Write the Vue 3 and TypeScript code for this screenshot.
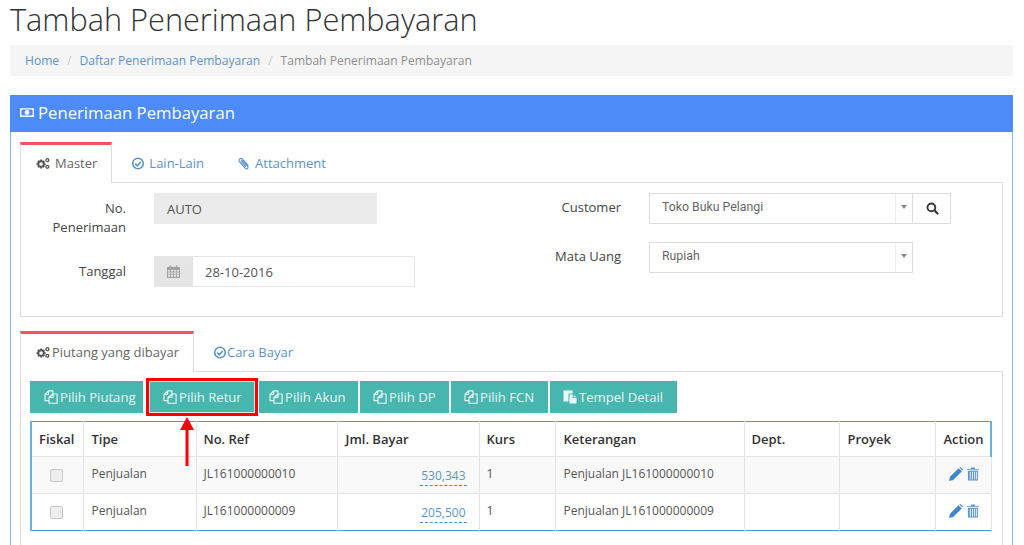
<script setup lang="ts">
const masterTabs = [
  { label: 'Master', icon: 'cogs', active: true },
  { label: 'Lain-Lain', icon: 'check', active: false },
  { label: 'Attachment', icon: 'clip', active: false },
]
const detailTabs = [
  { label: 'Piutang yang dibayar', icon: 'cogs', active: true },
  { label: 'Cara Bayar', icon: 'check', active: false },
]
const buttons = [
  { label: 'Pilih Piutang', icon: 'copy', w: 113, pad: 14 },
  { label: 'Pilih Retur', icon: 'copy', w: 106, pad: 14, mark: true },
  { label: 'Pilih Akun', icon: 'copy', w: 99, pad: 10 },
  { label: 'Pilih DP', icon: 'copy', w: 89, pad: 13 },
  { label: 'Pilih FCN', icon: 'copy', w: 97, pad: 13 },
  { label: 'Tempel Detail', icon: 'paste', w: 127, pad: 13 },
]
const headers = ['Fiskal', 'Tipe', 'No. Ref', 'Jml. Bayar', 'Kurs', 'Keterangan', 'Dept.', 'Proyek', 'Action']
const rows = [
  { tipe: 'Penjualan', ref: 'JL161000000010', jml: '530,343', kurs: '1', ket: 'Penjualan JL161000000010' },
  { tipe: 'Penjualan', ref: 'JL161000000009', jml: '205,500', kurs: '1', ket: 'Penjualan JL161000000009' },
]
</script>

<template>
  <div class="page">
    <svg class="defs" width="0" height="0" aria-hidden="true">
      <symbol id="i-money" viewBox="0 0 16 12">
        <path fill="currentColor" fill-rule="evenodd" d="M0 1h16v10H0zM2.5 2.5a1 1 0 0 1-1 1v5a1 1 0 0 1 1 1h11a1 1 0 0 1 1-1v-5a1 1 0 0 1-1-1zM8 3.2a2.8 2.8 0 1 1 0 5.6 2.8 2.8 0 0 1 0-5.6z" />
      </symbol>
      <symbol id="i-cogs" viewBox="0 0 16 14">
        <circle cx="5.8" cy="7.6" r="3.2" fill="none" stroke="currentColor" stroke-width="2.2" />
        <path stroke="currentColor" stroke-width="2" d="M5.8 2.4v2M5.8 10.8v2M.6 7.6h2M9 7.6h2M2.2 4l1.3 1.3M8.1 9.9 9.4 11.2M2.2 11.2l1.3-1.3M8.1 5.3 9.4 4" />
        <circle cx="13" cy="3.2" r="1.7" fill="none" stroke="currentColor" stroke-width="1.5" />
        <circle cx="13" cy="10.8" r="1.7" fill="none" stroke="currentColor" stroke-width="1.5" />
      </symbol>
      <symbol id="i-check" viewBox="0 0 14 14">
        <circle cx="7" cy="7" r="5.7" fill="none" stroke="currentColor" stroke-width="1.7" />
        <path fill="none" stroke="currentColor" stroke-width="1.8" d="M4 7.2l2.2 2.2L10 5.4" />
      </symbol>
      <symbol id="i-clip" viewBox="0 0 14 14">
        <path fill="none" stroke="currentColor" stroke-width="1.2" d="M11.8 9.4 5.6 2.6C4.6 1.5 3.3 1.3 2.3 2.2s-.8 2.2.1 3.2l6 6.6c.8.9 1.8 1 2.5.4s.6-1.6-.1-2.4L5.4 4.2c-.4-.5-.9-.5-1.2-.2s-.3.8.1 1.2L9 10.4" />
      </symbol>
      <symbol id="i-copy" viewBox="0 0 14 14">
        <path fill="none" stroke="currentColor" stroke-width="1.15" stroke-linejoin="round" d="M9 4V.9H4.6L1 4.5v6.1h4M4.6.9v3.6H1M9 4H13.1v9.2H5V7.4zM9 4v3.4H5" />
      </symbol>
      <symbol id="i-paste" viewBox="0 0 14 14">
        <path fill="currentColor" d="M.5.5h9v3H5.5v8h-5zM6.5 4.5h3.2v3.6h3.8v5.4h-7zM10.7 4.7l2.6 2.5h-2.6z" />
      </symbol>
      <symbol id="i-cal" viewBox="0 0 13 13">
        <path fill="currentColor" fill-rule="evenodd" d="M0 2h2.6V.5h1.6V2h4.6V.5h1.6V2H13v11H0zM1 5v1.6h2.2V5zM4 5v1.6h2.2V5zM7 5v1.6h2.2V5zM10 5v1.6h2V5zM1 7.4V9h2.2V7.4zM4 7.4V9h2.2V7.4zM7 7.4V9h2.2V7.4zM10 7.4V9h2V7.4zM1 9.8v1.9h2.2V9.8zM4 9.8v1.9h2.2V9.8zM7 9.8v1.9h2.2V9.8zM10 9.8v1.9h2V9.8z" />
      </symbol>
      <symbol id="i-search" viewBox="0 0 14 14">
        <circle cx="5.8" cy="5.8" r="4.2" fill="none" stroke="currentColor" stroke-width="2" />
        <path stroke="currentColor" stroke-width="2.4" stroke-linecap="round" d="M9.2 9.2l3.2 3.2" />
      </symbol>
      <symbol id="i-pencil" viewBox="0 0 14 14">
        <path fill="currentColor" d="M0 14l1-4.2L9.6 1.2l3.2 3.2L4.2 13zM10.4.5l1-.5 2.6 2.6-.5 1z" />
      </symbol>
      <symbol id="i-trash" viewBox="0 0 13 14">
        <path fill="currentColor" fill-rule="evenodd" d="M4 1.5 4.6 0h3.8L9 1.5h4v1H0v-1zM1 3.4h11V14H1zM3 4.6V13h1V4.6zM5.4 4.6V13h1V4.6zM7.8 4.6V13h1V4.6zM10 4.6V13h1V4.6z" />
      </symbol>
    </svg>

    <h1 class="title">Tambah Penerimaan Pembayaran</h1>

    <nav class="crumbs">
      <a>Home</a><span class="sep">/</span>
      <a>Daftar Penerimaan Pembayaran</a><span class="sep">/</span>
      <span class="now">Tambah Penerimaan Pembayaran</span>
    </nav>

    <section class="panel">
      <header class="panel-head">
        <svg class="ic-money"><use href="#i-money" /></svg>
        <span>Penerimaan Pembayaran</span>
      </header>

      <div class="panel-body">
        <ul class="tabs">
          <li v-for="t in masterTabs" :key="t.label" class="tab" :class="{ on: t.active }">
            <svg class="ic"><use :href="`#i-${t.icon}`" /></svg>{{ t.label }}
          </li>
        </ul>

        <div class="tab-box form-box">
          <div class="form-col left">
            <div class="field first">
              <label class="lab">No. Penerimaan</label>
              <div class="input readonly">AUTO</div>
            </div>
            <div class="field second">
              <label class="lab">Tanggal</label>
              <div class="date">
                <span class="addon"><svg class="ic-cal"><use href="#i-cal" /></svg></span>
                <span class="date-val">28-10-2016</span>
              </div>
            </div>
          </div>
          <div class="form-col right">
            <div class="field rfield">
              <label class="lab">Customer</label>
              <div class="select"><span>Toko Buku Pelangi</span><i class="caret"></i></div>
              <button class="search"><svg class="ic-search"><use href="#i-search" /></svg></button>
            </div>
            <div class="field rfield">
              <label class="lab">Mata Uang</label>
              <div class="select"><span>Rupiah</span><i class="caret"></i></div>
            </div>
          </div>
        </div>

        <ul class="tabs lower">
          <li v-for="t in detailTabs" :key="t.label" class="tab tight" :class="{ on: t.active }">
            <svg class="ic"><use :href="`#i-${t.icon}`" /></svg>{{ t.label }}
          </li>
        </ul>

        <div class="tab-box detail-box">
          <div class="btns">
            <button
              v-for="b in buttons"
              :key="b.label"
              class="btn"
              :class="{ marked: b.mark }"
              :style="{ width: b.w + 'px', paddingLeft: b.pad + 'px' }"
            >
              <svg class="ic-btn"><use :href="`#i-${b.icon}`" /></svg>{{ b.label }}
              <template v-if="b.mark">
                <span class="mark-box"></span>
                <svg class="arrow" width="14" height="49" viewBox="0 0 14 49">
                  <path fill="#f00" d="M7 0l7 13H8.5v36h-3V13H0z" />
                </svg>
              </template>
            </button>
          </div>

          <table class="grid">
            <colgroup>
              <col style="width: 52px" /><col style="width: 113px" /><col style="width: 141px" />
              <col style="width: 142px" /><col style="width: 76px" /><col style="width: 189px" />
              <col style="width: 95px" /><col style="width: 96px" /><col />
            </colgroup>
            <thead>
              <tr><th v-for="h in headers" :key="h">{{ h }}</th></tr>
            </thead>
            <tbody>
              <tr v-for="r in rows" :key="r.ref">
                <td class="center"><span class="cb"></span></td>
                <td>{{ r.tipe }}</td>
                <td>{{ r.ref }}</td>
                <td class="num"><a class="editable">{{ r.jml }}</a></td>
                <td>{{ r.kurs }}</td>
                <td>{{ r.ket }}</td>
                <td></td>
                <td></td>
                <td class="acts">
                  <svg class="ic-pencil"><use href="#i-pencil" /></svg>
                  <svg class="ic-trash"><use href="#i-trash" /></svg>
                </td>
              </tr>
            </tbody>
          </table>
        </div>
      </div>
    </section>
  </div>
</template>

<style>
html, body { margin: 0; background: #fff; overflow: hidden; }
</style>

<style scoped>
.page {
  width: 1024px;
  height: 545px;
  overflow: hidden;
  box-sizing: border-box;
  padding: 0 11px 0 10px;
  font-family: "Open Sans", "Noto Sans", sans-serif;
  font-size: 13px;
  color: #333;
  background: #fff;
}
.defs { position: absolute; }
.title {
  margin: 0;
  height: 45px;
  font-size: 30.7px;
  line-height: 38px;
  font-weight: 300;
  color: #333;
  white-space: nowrap;
}
.crumbs {
  height: 31px;
  line-height: 31px;
  padding-left: 15px;
  background: #f5f5f5;
  font-size: 12.05px;
  white-space: nowrap;
}
.crumbs a { color: #5b94cc; }
.sep { color: #ccc; padding: 0 8px; }
.now { color: #8f8f8f; }
.panel {
  margin-top: 19px;
  border: 1px solid #8db4fa;
  border-top: 0;
  height: 470px;
  box-sizing: border-box;
}
.panel-head {
  display: flex;
  align-items: center;
  height: 37px;
  box-sizing: border-box;
  padding: 0 0 2px 10px;
  margin: 0 -1px;
  background: #4d8bf9;
  color: #fff;
  font-size: 16.7px;
}
.ic-money { width: 14px; height: 11px; margin-right: 4px; }
.panel-body { padding: 10px 9px 0; }
.tabs {
  display: flex;
  list-style: none;
  margin: 0;
  padding: 0;
  height: 41px;
  box-sizing: border-box;
}
.tabs.lower { margin-top: 14px; }
.tab {
  display: flex;
  align-items: center;
  padding: 1px 14px 0 19px;
  color: #5b94cc;
  white-space: nowrap;
}
.tab .ic { width: 14px; height: 13px; margin-right: 4px; }
.tab.on {
  position: relative;
  z-index: 1;
  height: 41px;
  box-sizing: border-box;
  padding: 0 14px 2px 15px;
  color: #666;
  background: #fff;
  border: 1px solid #ddd;
  border-top: 3px solid #f0555c;
  border-bottom: 0;
}
.tab.on .ic { color: #555; margin-right: 5px; }
.tab.tight .ic { margin-right: 0; }
.tab.tight.on .ic { margin-right: 2px; }
.tab-box { border: 1px solid #ddd; margin-top: -1px; }
.form-box {
  display: flex;
  height: 135px;
  box-sizing: border-box;
}
.form-col { box-sizing: border-box; }
.form-col.left { width: 491px; }
.form-col.right { flex: 1; }
.field { display: flex; color: #444; }
.lab {
  text-align: right;
  line-height: 19px;
  font-size: 13px;
  color: #444;
}
.left .lab { width: 80px; margin: 0 28px 0 25px; padding-top: 6px; }
.first { margin-top: 10px; height: 63px; }
.input.readonly {
  width: 223px;
  height: 31px;
  line-height: 33px;
  padding-left: 13px;
  box-sizing: border-box;
  background: #ebebeb;
  font-size: 13px;
  color: #555;
}
.date {
  display: flex;
  width: 261px;
  height: 31px;
  box-sizing: border-box;
  border: 1px solid #e6e6e6;
  border-left: 0;
}
.addon {
  display: flex;
  align-items: center;
  justify-content: center;
  width: 39px;
  background: #e5e5e5;
  color: #a3a3a3;
}
.ic-cal { width: 13px; height: 13px; }
.date-val { padding-left: 12px; line-height: 31px; font-size: 13px; color: #555; }
.rfield { height: 31px; margin-top: 10px; }
.rfield + .rfield { margin-top: 18px; }
.right .lab { width: 109px; margin-right: 28px; padding-top: 5px; }
.select {
  position: relative;
  width: 264px;
  height: 31px;
  box-sizing: border-box;
  padding-left: 12px;
  border: 1px solid #ddd;
  line-height: 26px;
  font-family: "Roboto", sans-serif;
  font-size: 12.3px;
  color: #666;
}
.select::after {
  content: "";
  position: absolute;
  top: 0;
  bottom: 0;
  right: 16px;
  border-left: 1px solid #eee;
}
.caret {
  position: absolute;
  right: 5px;
  top: 11px;
  border-left: 3px solid transparent;
  border-right: 3px solid transparent;
  border-top: 4px solid #888;
}
.search {
  width: 38px;
  height: 31px;
  box-sizing: border-box;
  padding: 0 0 0 2px;
  border: 1px solid #ddd;
  border-left: 0;
  background: #fff;
  color: #333;
  display: flex;
  align-items: center;
  justify-content: center;
}
.ic-search { width: 13px; height: 13px; }
.detail-box { padding: 9px 10px 0 9px; height: 170px; box-sizing: content-box; }
.btns { display: flex; height: 32px; }
.btn {
  position: relative;
  height: 32px;
  box-sizing: border-box;
  padding: 0;
  margin-right: 2px;
  border: 0;
  background: #47b6ae;
  color: #e9f7f5;
  font-family: inherit;
  font-size: 13.1px;
  display: flex;
  align-items: center;
  justify-content: flex-start;
  white-space: nowrap;
}
.btn.marked { margin: 0 4px; }
.ic-btn { width: 14px; height: 14px; margin-right: 2px; }
.mark-box {
  position: absolute;
  inset: -3px;
  border: 3px solid #f00;
  outline: 1px solid #e4e4e4;
  outline-offset: -4px;
}
.arrow { position: absolute; top: 36px; left: 31px; z-index: 2; }
.grid {
  margin-top: 8px;
  width: 962px;
  table-layout: fixed;
  border-collapse: collapse;
  border-top: 1px solid #4a9fd4;
  border-left: 2px solid #6cb0dc;
  border-bottom: 1px solid #4a9fd4;
}
.grid th {
  height: 34px;
  padding: 0 7px;
  text-align: left;
  font-weight: 600;
  font-size: 13px;
  color: #333;
  border: 1px solid #e4e4e4;
  border-top: 0;
}
.grid td {
  height: 37px;
  box-sizing: border-box;
  padding: 0 7px 3px;
  font-size: 12px;
  color: #555;
  border: 1px solid #e4e4e4;
}
.grid th:nth-child(2), .grid td:nth-child(2),
.grid th:nth-child(4),
.grid th:nth-child(6), .grid td:nth-child(6),
.grid th:nth-child(8),
.grid th:nth-child(9) { padding-left: 8px; }
.grid th:last-child { border-right: 2px solid #6cb0dc; }
.grid tr:last-child td { border-bottom: 0; }
.grid th:first-child, .grid td:first-child { border-left: 0; }
.grid tbody tr:first-child { background: #f9f9f9; }
.center { text-align: center; padding-right: 9px !important; }
.cb {
  display: inline-block;
  width: 11px;
  height: 11px;
  background: #eee;
  border: 1px solid #c8c8c8;
  border-radius: 2px;
  vertical-align: middle;
  position: relative;
  top: 1px;
}
.num { text-align: right; padding-right: 12px !important; }
.editable {
  display: inline-block;
  padding: 6px 1px 1px;
  color: #5b94cc;
  border-bottom: 1px dashed #4a8fd6;
  line-height: 17px;
  font-size: 12px;
}
.acts { padding: 0 0 3px 13px !important; white-space: nowrap; line-height: 0; }
.ic-pencil { width: 14px; height: 14px; color: #3f86cc; margin-right: 4px; }
.ic-trash { width: 12px; height: 14px; color: #5a96d8; }
</style>
